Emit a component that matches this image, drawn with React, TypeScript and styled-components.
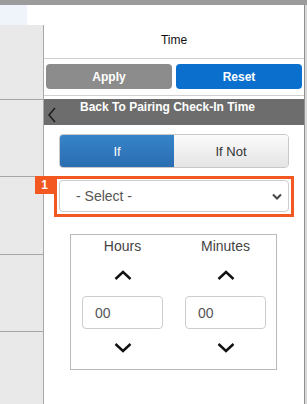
import React, { useState } from "react";
import styled, { createGlobalStyle } from "styled-components";

const GlobalStyle = createGlobalStyle`
  html, body {
    margin: 0;
    padding: 0;
    height: 100%;
    overflow: hidden;
    background: #fff;
    font-family: "Liberation Sans", Arial, sans-serif;
  }
  #root {
    height: 100%;
  }
`;

const Page = styled.div`
  display: flex;
  flex-direction: column;
  height: 100%;
`;

const TopBar = styled.div`
  height: 5px;
  background: #9b9b9b;
  flex-shrink: 0;
`;

const Main = styled.div`
  flex: 1;
  display: flex;
  min-height: 0;
`;

const LeftColumn = styled.div`
  width: 44px;
  display: flex;
  flex-direction: column;
  flex-shrink: 0;
`;

const LeftTab = styled.div`
  height: 20px;
  width: 27px;
  background: #eef4fa;
`;

const LeftList = styled.div`
  flex: 1;
  background: #e9e9e9;
  border-right: 1px solid #a8a8a8;
`;

const LeftRow = styled.div<{ $h: number }>`
  height: ${(p) => p.$h}px;
  border-bottom: 1px solid #a6a6a6;
`;

const Panel = styled.div`
  width: 260px;
  border-right: 1px solid #8f8f8f;
  display: flex;
  flex-direction: column;
  background: #fff;
`;

const Strip = styled.div`
  flex: 1;
  background: #d9d9d9;
`;

const Header = styled.div`
  padding: 28px 0 11px;
  font-size: 12px;
  line-height: 14px;
  text-align: center;
  color: #111;
  border-bottom: 1px solid #d0d0d0;
`;

const ButtonRow = styled.div`
  display: flex;
  gap: 4px;
  padding: 5px 2px 6px;
  border-bottom: 1px solid #d0d0d0;
`;

const ActionButton = styled.button<{ $primary?: boolean }>`
  flex: 1;
  height: 25px;
  border: none;
  border-radius: 4px;
  background: ${(p) => (p.$primary ? "#0a6fcd" : "#8c8c8c")};
  color: #fff;
  font-family: inherit;
  font-size: 12px;
  font-weight: bold;
  cursor: pointer;
`;

const BackBar = styled.div`
  position: relative;
  margin-top: 3px;
  height: 26px;
  background: #6d6d6d;
  color: #fff;
  font-size: 12px;
  font-weight: bold;
  line-height: 14px;
  padding: 1px 13px 0 0;
  text-align: center;
  box-sizing: border-box;
`;

const BackIcon = styled.svg`
  position: absolute;
  left: 3px;
  bottom: 2px;
`;

const Toggle = styled.div`
  display: flex;
  margin: 9px 15px 0;
  height: 34px;
  border-radius: 4px;
  overflow: hidden;
  border: 1px solid #c8c8c8;
  box-sizing: border-box;
`;

const ToggleOption = styled.div<{ $active?: boolean }>`
  flex: 1;
  display: flex;
  align-items: center;
  justify-content: center;
  font-size: 13px;
  cursor: pointer;
  color: ${(p) => (p.$active ? "#fff" : "#333")};
  background: ${(p) =>
    p.$active
      ? "linear-gradient(#3784c9, #2a6cb0)"
      : "linear-gradient(#fbfbfb, #e4e4e4)"};
`;

const Highlight = styled.div`
  position: relative;
  margin: 8px 10px 0;
  border: 3px solid #f2581f;
  padding: 1px 2px 2px;
`;

const Badge = styled.div`
  position: absolute;
  left: -22px;
  top: -3px;
  width: 19px;
  height: 18px;
  background: #f2581f;
  color: #fff;
  font-size: 12px;
  font-weight: bold;
  display: flex;
  align-items: center;
  justify-content: center;
`;

const SelectBox = styled.div`
  height: 32px;
  border: 1px solid #cdcdcd;
  border-radius: 4px;
  box-sizing: border-box;
  display: flex;
  align-items: center;
  justify-content: space-between;
  padding: 0 6px 0 16px;
  font-size: 14px;
  color: #555;
`;

const TimeBox = styled.div`
  margin: 17px 27px 0 26px;
  border: 1px solid #b9b9b9;
  display: flex;
  gap: 22px;
  padding: 0 10px 2px 11px;
`;

const TimeColumn = styled.div`
  flex: 1;
  display: flex;
  flex-direction: column;
  align-items: center;
`;

const TimeLabel = styled.div`
  margin-top: 3px;
  font-size: 14px;
  line-height: 16px;
  color: #444;
`;

const Stepper = styled.div<{ $h: number }>`
  height: ${(p) => p.$h}px;
  width: 100%;
  display: flex;
  align-items: center;
  justify-content: center;
  cursor: pointer;
`;

const TimeInput = styled.div`
  width: 100%;
  height: 33px;
  border: 1px solid #cdcdcd;
  border-radius: 4px;
  box-sizing: border-box;
  display: flex;
  align-items: center;
  padding-left: 12px;
  font-size: 14px;
  color: #555;
`;

const Chevron = ({ up }: { up?: boolean }) => (
  <svg width="18" height="10" viewBox="0 0 18 10">
    <path
      d={up ? "M1.5 9 L9 2 L16.5 9" : "M1.5 1 L9 8 L16.5 1"}
      fill="none"
      stroke="#111"
      strokeWidth="2.4"
    />
  </svg>
);

const TimeField = ({ label, value }: { label: string; value: string }) => (
  <TimeColumn>
    <TimeLabel>{label}</TimeLabel>
    <Stepper $h={42}>
      <Chevron up />
    </Stepper>
    <TimeInput>{value}</TimeInput>
    <Stepper $h={38}>
      <Chevron />
    </Stepper>
  </TimeColumn>
);

const App: React.FC = () => {
  const [mode, setMode] = useState<"if" | "ifnot">("if");

  return (
    <>
      <GlobalStyle />
      <Page>
        <TopBar />
        <Main>
          <LeftColumn>
            <LeftTab />
            <LeftList>
              <LeftRow $h={74} />
              <LeftRow $h={76} />
              <LeftRow $h={77} />
              <LeftRow $h={76} />
            </LeftList>
          </LeftColumn>
          <Panel>
            <Header>Time</Header>
            <ButtonRow>
              <ActionButton>Apply</ActionButton>
              <ActionButton $primary>Reset</ActionButton>
            </ButtonRow>
            <BackBar>
              Back To Pairing Check-In Time
              <BackIcon width="10" height="16" viewBox="0 0 10 16">
                <path d="M8 1 L2 8 L8 15" fill="none" stroke="#1a1a1a" strokeWidth="1.4" />
              </BackIcon>
            </BackBar>
            <Toggle>
              <ToggleOption $active={mode === "if"} onClick={() => setMode("if")}>
                If
              </ToggleOption>
              <ToggleOption $active={mode === "ifnot"} onClick={() => setMode("ifnot")}>
                If Not
              </ToggleOption>
            </Toggle>
            <Highlight>
              <Badge>1</Badge>
              <SelectBox>
                <span>- Select -</span>
                <svg width="10" height="7" viewBox="0 0 10 7">
                  <path d="M1 1.5 L5 5.5 L9 1.5" fill="none" stroke="#444" strokeWidth="2" />
                </svg>
              </SelectBox>
            </Highlight>
            <TimeBox>
              <TimeField label="Hours" value="00" />
              <TimeField label="Minutes" value="00" />
            </TimeBox>
          </Panel>
          <Strip />
        </Main>
      </Page>
    </>
  );
};

export default App;
